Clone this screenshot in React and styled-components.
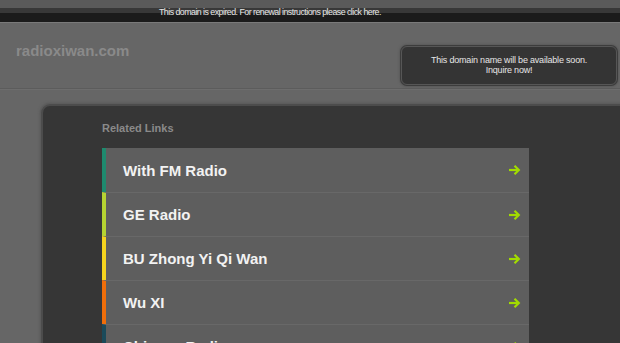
import styled, { createGlobalStyle } from "styled-components";

const GlobalStyle = createGlobalStyle`
  html, body {
    margin: 0;
    padding: 0;
    background: #666666;
    font-family: "Liberation Sans", Arial, sans-serif;
    overflow: hidden;
  }
`;

const TopBar = styled.div`
  height: 23px;
  border-bottom: 1px solid #7a7a7a;
  background: linear-gradient(
    #5a5a5a 0px,
    #5a5a5a 8px,
    #383838 8px,
    #383838 13px,
    #1b1b1b 13px
  );
  display: flex;
  align-items: center;
  padding: 2px 0 0 159px;
  box-sizing: border-box;
  color: #e8e8e8;
  font-size: 8.8px;
  letter-spacing: -0.52px;
`;

const Header = styled.header`
  height: 65px;
  border-bottom: 1px solid #5c5c5c;
  box-shadow: 0 1px 0 #6d6d6d;
  display: flex;
  justify-content: space-between;
  align-items: flex-start;
  padding: 0 3px 0 16px;
`;

const Domain = styled.div`
  margin-top: 19px;
  font-size: 15px;
  font-weight: bold;
  color: #8a8a8a;
`;

const Notice = styled.div`
  margin-top: 23px;
  width: 216px;
  height: 39px;
  box-sizing: border-box;
  background: #343434;
  border: 1px solid #565656;
  border-radius: 6px;
  box-shadow: 0 0 0 1px #3c3c3c, 0 0 2px 2px #5a5a5a;
  color: #e6e6e6;
  font-size: 9px;
  letter-spacing: -0.2px;
  line-height: 10px;
  text-align: center;
  padding-top: 8px;
`;

const Panel = styled.main`
  margin: 15px 0 0 41px;
  width: 546px;
  height: 260px;
  background: #363636;
  border: 2px solid #4c4c4c;
  border-bottom: none;
  border-radius: 9px 9px 0 0;
  box-shadow: 0 0 0 1px #5c5c5c, 0 0 3px 1px #555;
  padding: 16px 0 0 59px;
`;

const Title = styled.div`
  font-size: 11px;
  font-weight: bold;
  color: #8a8a8a;
  margin-bottom: 14px;
`;

const List = styled.ul`
  list-style: none;
  margin: 0;
  padding: 0;
  width: 427px;
`;

const Row = styled.li`
  height: 44px;
  box-sizing: border-box;
  background: #5e5e5e;
  border-left: 4px solid ${(p) => p.$accent};
  border-top: ${(p) => (p.$first ? "none" : "1px solid #686868")};
  display: flex;
  align-items: center;
  justify-content: space-between;
  padding: 0 8px 0 17px;
  color: #f2f2f2;
  font-size: 15px;
  font-weight: bold;
`;

const Arrow = () => (
  <svg width="12" height="10" viewBox="0 0 12 10">
    <path d="M0 5h8.5" stroke="#a2dc00" strokeWidth="2.2" />
    <path d="M5.5 0.8L9.8 5L5.5 9.2" stroke="#a2dc00" strokeWidth="2.2" fill="none" />
  </svg>
);

const links = [
  { name: "With FM Radio", color: "#1e8a6e" },
  { name: "GE Radio", color: "#b6d432" },
  { name: "BU Zhong Yi Qi Wan", color: "#f6d41e" },
  { name: "Wu XI", color: "#f06e0a" },
  { name: "Chinese Radio", color: "#1a4a5a" },
];

export default function App() {
  return (
    <>
      <GlobalStyle />
      <TopBar>This domain is expired. For renewal instructions please click here.</TopBar>
      <Header>
        <Domain>radioxiwan.com</Domain>
        <Notice>
          This domain name will be available soon.
          <br />
          Inquire now!
        </Notice>
      </Header>
      <Panel>
        <Title>Related Links</Title>
        <List>
          {links.map((l, i) => (
            <Row key={l.name} $accent={l.color} $first={i === 0}>
              {l.name}
              <Arrow />
            </Row>
          ))}
        </List>
      </Panel>
    </>
  );
}
